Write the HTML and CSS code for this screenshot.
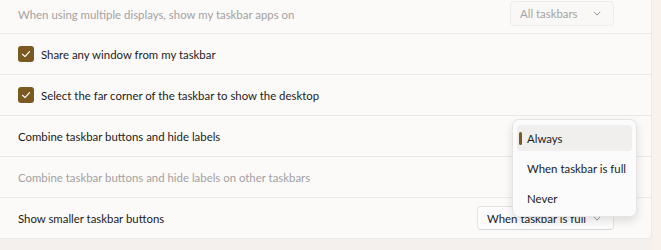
FILE: index.html
```html
<!DOCTYPE html>
<html>
<head>
<meta charset="utf-8">
<link rel="stylesheet" href="styles.css">
</head>
<body>
<div class="page">
  <div class="card">
    <div class="row first">
      <span class="label disabled">When using multiple displays, show my taskbar apps on</span>
      <div class="select disabled-select"><span>All taskbars</span><svg class="chev" viewBox="0 0 10 6" width="8" height="5"><path d="M1 1 L5 5 L9 1" fill="none" stroke="currentColor" stroke-width="1"/></svg></div>
    </div>
    <div class="row">
      <span class="check"><svg viewBox="0 0 16 16" width="16" height="16"><path d="M4.5 8.3 L7 10.6 L11.5 5.6" fill="none" stroke="#fff" stroke-width="1.2" stroke-linecap="round" stroke-linejoin="round"/></svg></span>
      <span class="label">Share any window from my taskbar</span>
    </div>
    <div class="row">
      <span class="check"><svg viewBox="0 0 16 16" width="16" height="16"><path d="M4.5 8.3 L7 10.6 L11.5 5.6" fill="none" stroke="#fff" stroke-width="1.2" stroke-linecap="round" stroke-linejoin="round"/></svg></span>
      <span class="label">Select the far corner of the taskbar to show the desktop</span>
    </div>
    <div class="row">
      <span class="label">Combine taskbar buttons and hide labels</span>
    </div>
    <div class="row">
      <span class="label disabled">Combine taskbar buttons and hide labels on other taskbars</span>
    </div>
    <div class="row last">
      <span class="label">Show smaller taskbar buttons</span>
      <div class="select"><span>When taskbar is full</span><svg class="chev" viewBox="0 0 10 6" width="8" height="5"><path d="M1 1 L5 5 L9 1" fill="none" stroke="currentColor" stroke-width="1"/></svg></div>
    </div>
    <div class="menu">
      <div class="item selected"><span class="bar"></span>Always</div>
      <div class="item">When taskbar is full</div>
      <div class="item">Never</div>
    </div>
  </div>
  <div class="strip"></div>
</div>
</body>
</html>
```
FILE: styles.css
```css
html, body {
  margin: 0;
  padding: 0;
}
body {
  width: 661px;
  height: 250px;
  overflow: hidden;
  background: #f3f0ee;
  font-family: Lato, "Noto Sans", sans-serif;
  font-size: 11.4px;
  color: #1c1c1c;
}
.page {
  display: flex;
  align-items: flex-start;
  height: 250px;
}
.card {
  position: relative;
  width: 651px;
  background: #fbfaf9;
  border-bottom-right-radius: 4px;
  box-shadow: 0 1px 0 #ebe8e6;
  border-right: 1px solid #ede9e6;
}
.strip {
  flex: 1;
  height: 250px;
  background: #f8f1ec;
}
.row {
  display: flex;
  align-items: center;
  height: 40px;
  padding: 0 18px;
  border-bottom: 1px solid #ebe9e7;
  gap: 7px;
}
.row.first {
  height: 32px;
  padding-bottom: 1px;
  align-items: flex-start;
}
.row.first .label {
  margin-top: 8px;
}
.row.last {
  border-bottom: none;
}
.label {
  flex: 1;
  white-space: nowrap;
}
.disabled {
  color: #a3a19f;
}
.check {
  width: 16px;
  height: 16px;
  border-radius: 3px;
  background: #7b5a22;
  display: flex;
  flex: none;
}
.select {
  display: flex;
  align-items: center;
  justify-content: space-between;
  height: 24px;
  box-sizing: border-box;
  padding: 0 12px 0 9px;
  border: 1px solid #e8e6e4;
  border-radius: 4px;
  background: #fdfdfd;
  margin-right: 19px;
  white-space: nowrap;
}
.select.disabled-select {
  width: 104px;
  height: 25px;
  margin-top: 1px;
  color: #a6a4a2;
  background: #f9f8f7;
  border-color: #eeeceb;
  padding-left: 9px;
}
.row.last .select {
  width: 137px;
  color: #1c1c1c;
  border-color: #e6e4e2;
  border-bottom-color: #d8d6d4;
}
.chev {
  color: #7a7a7a;
  flex: none;
}
.menu {
  position: absolute;
  left: 512px;
  top: 119px;
  width: 125px;
  box-sizing: border-box;
  padding: 5px 4px;
  background: #fbfbfb;
  border: 1px solid #e6e4e2;
  border-radius: 7px;
  box-shadow: 0 4px 10px rgba(0, 0, 0, 0.12);
}
.item {
  position: relative;
  height: 26px;
  margin-bottom: 4px;
  display: flex;
  align-items: center;
  padding-left: 10px;
  border-radius: 4px;
  white-space: nowrap;
}
.item:last-child {
  margin-bottom: 0;
}
.item.selected {
  background: #f0efee;
}
.bar {
  position: absolute;
  left: 2px;
  top: 7px;
  width: 3px;
  height: 13px;
  border-radius: 2px;
  background: #7b5a22;
}
```
